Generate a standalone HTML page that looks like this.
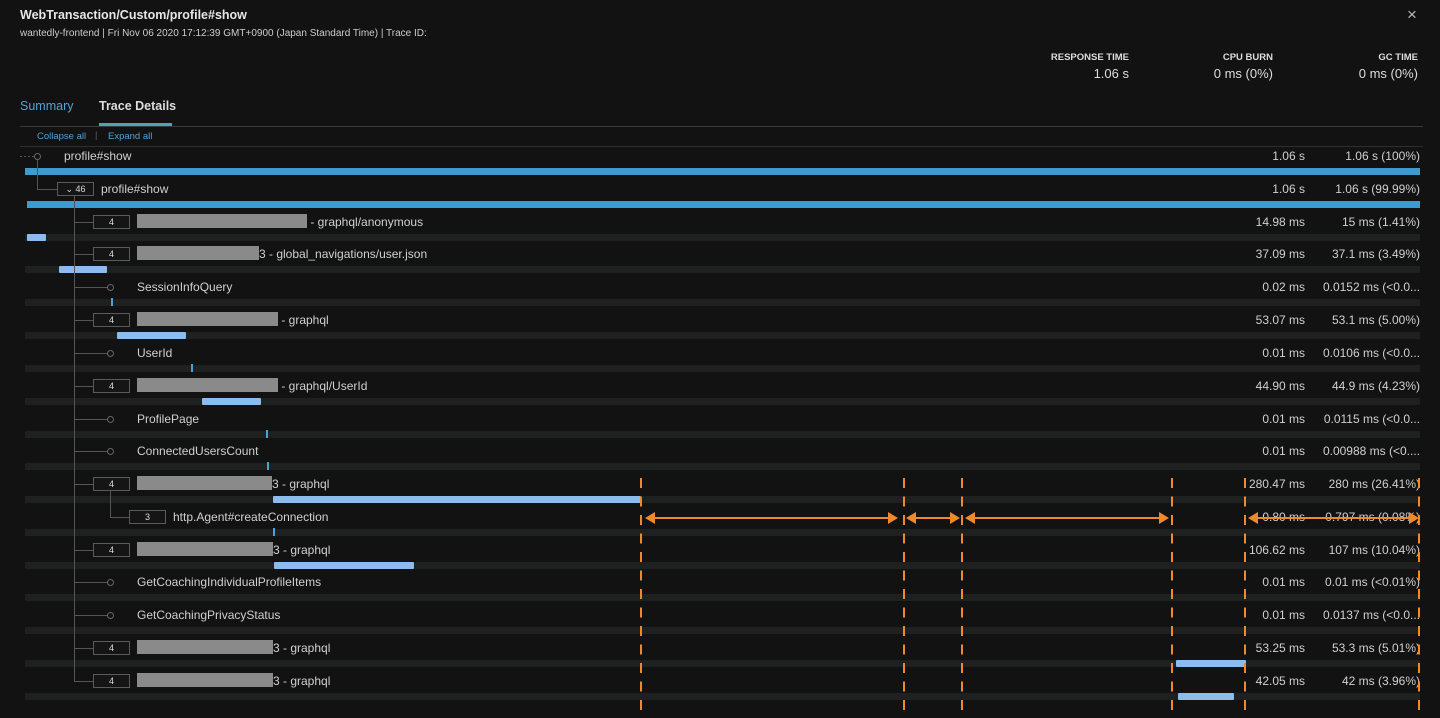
<!DOCTYPE html>
<html><head><meta charset="utf-8"><style>
*{margin:0;padding:0;box-sizing:border-box}
body{width:1440px;height:718px;background:#121212;font-family:"Liberation Sans",sans-serif;color:#d0d0d0;position:relative;overflow:hidden}
.a{position:absolute;white-space:nowrap}
.t{font-size:12px;line-height:16px}
.tr{position:absolute;left:25px;width:1395px;height:7px;background:#1f2020}
.b{position:absolute;height:7px;background:#8cbcee;border-radius:1px}
.tk{position:absolute;width:2px;height:8px;background:#4aa3d8}
.bd{position:absolute;z-index:2;width:37px;height:14px;border:1px solid #5a5a5a;background:#151515;font-size:9px;line-height:12px;text-align:center;color:#ddd}
.ci{position:absolute;z-index:2;width:7px;height:7px;border:1px solid #666;border-radius:50%;background:#121212}
.hl{position:absolute;z-index:2;height:1px;background:#555}
.vl{position:absolute;z-index:2;width:1px;background:#555}
.rd{display:inline-block;background:#8a8a8a;height:14px;vertical-align:-2px}
.d{position:absolute;right:135px;font-size:12px;text-align:right}
.p{position:absolute;right:20px;font-size:12px;text-align:right}
.dl{position:absolute;z-index:3;width:2px;top:478px;height:232px;background:repeating-linear-gradient(#f0892a 0 10px,transparent 10px 18.5px)}
.ar{position:absolute;z-index:3;height:2px;background:#f0892a;top:517px}
.ar:before{content:"";position:absolute;left:-2px;top:-5px;border:6px solid transparent;border-right:10px solid #f0892a;border-left:0}
.ar:after{content:"";position:absolute;right:-2px;top:-5px;border:6px solid transparent;border-left:10px solid #f0892a;border-right:0}
</style></head><body>
<div class="a" style="left:20px;top:8px;font-size:12.5px;font-weight:bold;color:#e6e6e6">WebTransaction/Custom/profile#show</div>
<div class="a" style="left:20px;top:28px;font-size:10px;color:#ccc">wantedly-frontend | Fri Nov 06 2020 17:12:39 GMT+0900 (Japan Standard Time) | Trace ID:</div>
<div class="a" style="left:1407px;top:5px;font-size:17px;color:#bbb">×</div>
<div class="a" style="right:311px;top:52px;font-size:9.5px;font-weight:bold;color:#ddd">RESPONSE TIME</div>
<div class="a" style="right:311px;top:66px;font-size:13px;color:#ddd">1.06 s</div>
<div class="a" style="right:167px;top:52px;font-size:9.5px;font-weight:bold;color:#ddd">CPU BURN</div>
<div class="a" style="right:167px;top:66px;font-size:13px;color:#ddd">0 ms (0%)</div>
<div class="a" style="right:22px;top:52px;font-size:9.5px;font-weight:bold;color:#ddd">GC TIME</div>
<div class="a" style="right:22px;top:66px;font-size:13px;color:#ddd">0 ms (0%)</div>
<div class="a" style="left:20px;top:99px;font-size:12.5px;color:#4ea4d6">Summary</div>
<div class="a" style="left:99px;top:99px;font-size:12.5px;font-weight:bold;color:#ddd">Trace Details</div>
<div class="a" style="left:20px;top:126px;width:1403px;height:1px;background:#3a3a3a"></div>
<div class="a" style="left:99px;top:123px;width:73px;height:3px;background:#4aa6b4"></div>
<div class="a" style="left:37px;top:131px;font-size:9.5px;color:#4ea4d6">Collapse all</div>
<div class="a" style="left:95px;top:130px;font-size:9px;color:#666">|</div>
<div class="a" style="left:108px;top:131px;font-size:9.5px;color:#4ea4d6">Expand all</div>
<div class="a" style="left:20px;top:146px;width:1403px;height:1px;background:#2e2e2e"></div>

<div class="hl" style="left:20px;top:156px;width:14px;background:repeating-linear-gradient(90deg,#555 0 2px,transparent 2px 4px)"></div>
<div class="ci" style="left:34px;top:153px"></div>
<div class="vl" style="left:37px;top:160px;height:29px"></div>
<div class="hl" style="left:37px;top:189px;width:20px"></div>
<div class="vl" style="left:74px;top:196px;height:486px"></div>

<div class="a t" style="left:64px;top:148px">profile#show</div>
<div class="d t" style="top:148px">1.06 s</div><div class="p t" style="top:148px">1.06 s (100%)</div>
<div class="a" style="left:25px;top:168px;width:1395px;height:7px;background:#3d9bd0"></div>
<div class="bd" style="left:57px;top:182px">⌄&nbsp;46</div>
<div class="a t" style="left:101px;top:181px">profile#show</div>
<div class="d t" style="top:181px">1.06 s</div><div class="p t" style="top:181px">1.06 s (99.99%)</div>
<div class="a" style="left:27px;top:201px;width:1393px;height:7px;background:#3d9bd0"></div>

<div class="tr" style="top:234px"></div><div class="tr" style="top:266px"></div><div class="tr" style="top:299px"></div><div class="tr" style="top:332px"></div><div class="tr" style="top:365px"></div><div class="tr" style="top:398px"></div><div class="tr" style="top:431px"></div><div class="tr" style="top:463px"></div><div class="tr" style="top:496px"></div><div class="tr" style="top:529px"></div><div class="tr" style="top:562px"></div><div class="tr" style="top:594px"></div><div class="tr" style="top:627px"></div><div class="tr" style="top:660px"></div><div class="tr" style="top:693px"></div>

<div class="hl" style="left:74px;top:222px;width:19px"></div><div class="bd" style="left:93px;top:215px">4</div>
<div class="hl" style="left:74px;top:254px;width:19px"></div><div class="bd" style="left:93px;top:247px">4</div>
<div class="hl" style="left:74px;top:287px;width:34px"></div><div class="ci" style="left:107px;top:284px"></div>
<div class="hl" style="left:74px;top:320px;width:19px"></div><div class="bd" style="left:93px;top:313px">4</div>
<div class="hl" style="left:74px;top:353px;width:34px"></div><div class="ci" style="left:107px;top:350px"></div>
<div class="hl" style="left:74px;top:386px;width:19px"></div><div class="bd" style="left:93px;top:379px">4</div>
<div class="hl" style="left:74px;top:419px;width:34px"></div><div class="ci" style="left:107px;top:416px"></div>
<div class="hl" style="left:74px;top:451px;width:34px"></div><div class="ci" style="left:107px;top:448px"></div>
<div class="hl" style="left:74px;top:484px;width:19px"></div><div class="bd" style="left:93px;top:477px">4</div>
<div class="vl" style="left:110px;top:491px;height:26px"></div><div class="hl" style="left:110px;top:517px;width:19px"></div><div class="bd" style="left:129px;top:510px">3</div>
<div class="hl" style="left:74px;top:550px;width:19px"></div><div class="bd" style="left:93px;top:543px">4</div>
<div class="hl" style="left:74px;top:582px;width:34px"></div><div class="ci" style="left:107px;top:579px"></div>
<div class="hl" style="left:74px;top:615px;width:34px"></div><div class="ci" style="left:107px;top:612px"></div>
<div class="hl" style="left:74px;top:648px;width:19px"></div><div class="bd" style="left:93px;top:641px">4</div>
<div class="hl" style="left:74px;top:681px;width:19px"></div><div class="bd" style="left:93px;top:674px">4</div>

<div class="a t" style="left:137px;top:214px"><span class="rd" style="width:170px"></span> - graphql/anonymous</div>
<div class="a t" style="left:137px;top:246px"><span class="rd" style="width:122px"></span>3 - global_navigations/user.json</div>
<div class="a t" style="left:137px;top:279px">SessionInfoQuery</div>
<div class="a t" style="left:137px;top:312px"><span class="rd" style="width:141px"></span> - graphql</div>
<div class="a t" style="left:137px;top:345px">UserId</div>
<div class="a t" style="left:137px;top:378px"><span class="rd" style="width:141px"></span> - graphql/UserId</div>
<div class="a t" style="left:137px;top:411px">ProfilePage</div>
<div class="a t" style="left:137px;top:443px">ConnectedUsersCount</div>
<div class="a t" style="left:137px;top:476px"><span class="rd" style="width:135px"></span>3 - graphql</div>
<div class="a t" style="left:173px;top:509px">http.Agent#createConnection</div>
<div class="a t" style="left:137px;top:542px"><span class="rd" style="width:136px"></span>3 - graphql</div>
<div class="a t" style="left:137px;top:574px">GetCoachingIndividualProfileItems</div>
<div class="a t" style="left:137px;top:607px">GetCoachingPrivacyStatus</div>
<div class="a t" style="left:137px;top:640px"><span class="rd" style="width:136px"></span>3 - graphql</div>
<div class="a t" style="left:137px;top:673px"><span class="rd" style="width:136px"></span>3 - graphql</div>

<div class="d t" style="top:214px">14.98 ms</div><div class="p t" style="top:214px">15 ms (1.41%)</div>
<div class="d t" style="top:246px">37.09 ms</div><div class="p t" style="top:246px">37.1 ms (3.49%)</div>
<div class="d t" style="top:279px">0.02 ms</div><div class="p t" style="top:279px">0.0152 ms (&lt;0.0...</div>
<div class="d t" style="top:312px">53.07 ms</div><div class="p t" style="top:312px">53.1 ms (5.00%)</div>
<div class="d t" style="top:345px">0.01 ms</div><div class="p t" style="top:345px">0.0106 ms (&lt;0.0...</div>
<div class="d t" style="top:378px">44.90 ms</div><div class="p t" style="top:378px">44.9 ms (4.23%)</div>
<div class="d t" style="top:411px">0.01 ms</div><div class="p t" style="top:411px">0.0115 ms (&lt;0.0...</div>
<div class="d t" style="top:443px">0.01 ms</div><div class="p t" style="top:443px">0.00988 ms (&lt;0....</div>
<div class="d t" style="top:476px">280.47 ms</div><div class="p t" style="top:476px">280 ms (26.41%)</div>
<div class="d t" style="top:509px">0.80 ms</div><div class="p t" style="top:509px">0.797 ms (0.08%)</div>
<div class="d t" style="top:542px">106.62 ms</div><div class="p t" style="top:542px">107 ms (10.04%)</div>
<div class="d t" style="top:574px">0.01 ms</div><div class="p t" style="top:574px">0.01 ms (&lt;0.01%)</div>
<div class="d t" style="top:607px">0.01 ms</div><div class="p t" style="top:607px">0.0137 ms (&lt;0.0...</div>
<div class="d t" style="top:640px">53.25 ms</div><div class="p t" style="top:640px">53.3 ms (5.01%)</div>
<div class="d t" style="top:673px">42.05 ms</div><div class="p t" style="top:673px">42 ms (3.96%)</div>

<div class="b" style="left:27px;top:234px;width:19px"></div>
<div class="b" style="left:59px;top:266px;width:48px"></div>
<div class="tk" style="left:111px;top:298px"></div>
<div class="b" style="left:117px;top:332px;width:69px"></div>
<div class="tk" style="left:191px;top:364px"></div>
<div class="b" style="left:202px;top:398px;width:59px"></div>
<div class="tk" style="left:266px;top:430px"></div>
<div class="tk" style="left:267px;top:462px"></div>
<div class="b" style="left:273px;top:496px;width:368px"></div>
<div class="tk" style="left:273px;top:528px"></div>
<div class="b" style="left:274px;top:562px;width:140px"></div>
<div class="b" style="left:1176px;top:660px;width:70px"></div>
<div class="b" style="left:1178px;top:693px;width:56px"></div>

<div class="dl" style="left:640px"></div>
<div class="dl" style="left:903px"></div>
<div class="dl" style="left:961px"></div>
<div class="dl" style="left:1171px"></div>
<div class="dl" style="left:1244px"></div>
<div class="dl" style="left:1418px"></div>
<div class="ar" style="left:647px;width:249px"></div>
<div class="ar" style="left:908px;width:50px"></div>
<div class="ar" style="left:967px;width:200px"></div>
<div class="ar" style="left:1250px;width:167px"></div>
</body></html>
